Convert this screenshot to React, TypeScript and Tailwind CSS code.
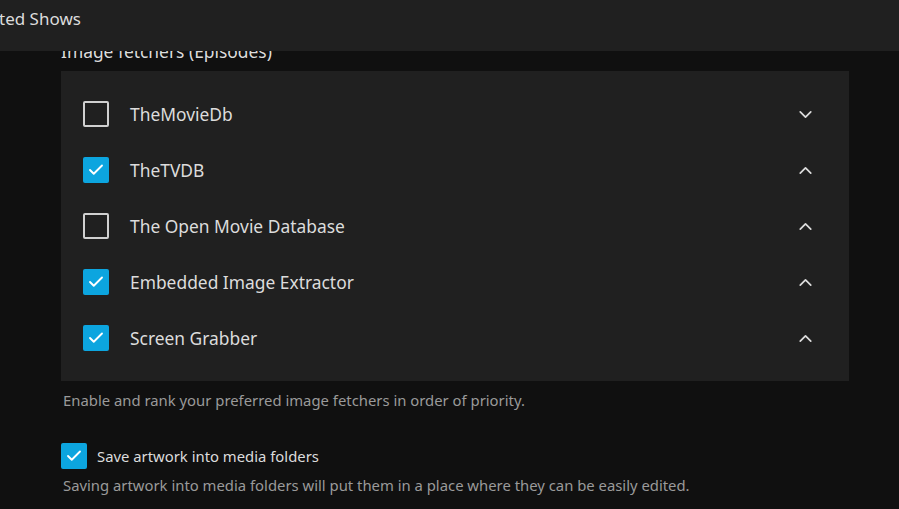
import React from "react";
import { ChevronDown, ChevronUp, Check } from "lucide-react";

interface Fetcher {
  name: string;
  enabled: boolean;
  down?: boolean;
}

const fetchers: Fetcher[] = [
  { name: "TheMovieDb", enabled: false, down: true },
  { name: "TheTVDB", enabled: true },
  { name: "The Open Movie Database", enabled: false },
  { name: "Embedded Image Extractor", enabled: true },
  { name: "Screen Grabber", enabled: true },
];

const Box = ({ checked }: { checked: boolean }) =>
  checked ? (
    <div className="flex h-[26px] w-[26px] shrink-0 items-center justify-center rounded-[2px] bg-[#0ca5df]">
      <Check className="h-[18px] w-[18px] text-white" strokeWidth={2.5} />
    </div>
  ) : (
    <div className="h-[26px] w-[26px] shrink-0 rounded-[2px] border-2 border-[#d0d0d0]" />
  );

const FetcherRow = ({ item }: { item: Fetcher }) => (
  <div className="flex h-[56px] items-center pl-[22px] pr-[24px]">
    <Box checked={item.enabled} />
    <span className="ml-[21px] flex-1 text-[17.4px] text-[#dcdcdc]">{item.name}</span>
    <button className="flex h-10 w-10 items-center justify-center text-[#dcdcdc]">
      {item.down ? (
        <ChevronDown size={21} strokeWidth={2} />
      ) : (
        <ChevronUp size={21} strokeWidth={2} />
      )}
    </button>
  </div>
);

export default function App() {
  return (
    <div
      className="relative h-[509px] w-[899px] overflow-hidden bg-[#101010]"
      style={{ fontFamily: '"Noto Sans", sans-serif' }}
    >
      {/* Top bar */}
      <div className="absolute left-0 right-0 top-0 z-10 h-[51px] bg-[#202020] pt-[6px]">
        <span className="-ml-px text-[17px] text-[#dcdcdc]">ted Shows</span>
      </div>

      <div className="pl-[61px] pr-[50px] pt-[40px]">
        <h2 className="text-[17.4px] leading-[22px] text-[#dcdcdc]">Image fetchers (Episodes)</h2>

        <div className="mt-[9px] bg-[#202020] py-[15px]">
          {fetchers.map((f) => (
            <FetcherRow key={f.name} item={f} />
          ))}
        </div>

        <p className="mt-[9px] pl-[2px] text-[14.85px] leading-[20px] text-[#9a9a9a]">
          Enable and rank your preferred image fetchers in order of priority.
        </p>

        <label className="mt-[33px] flex items-center">
          <Box checked={true} />
          <span className="ml-[10px] text-[14.85px] text-[#dcdcdc]">Save artwork into media folders</span>
        </label>

        <p className="mt-[6px] pl-[2px] text-[14.85px] leading-[20px] text-[#9a9a9a]">
          Saving artwork into media folders will put them in a place where they can be easily edited.
        </p>
      </div>
    </div>
  );
}
